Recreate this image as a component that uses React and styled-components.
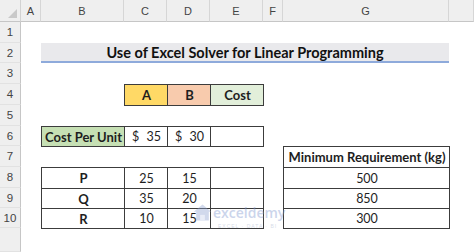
import React from "react";
import styled, { createGlobalStyle } from "styled-components";

const GlobalStyle = createGlobalStyle`
  html, body {
    margin: 0;
    padding: 0;
    background: #ffffff;
  }
  body {
    font-family: Lato, "Open Sans", "Liberation Sans", sans-serif;
    color: #1e1e1e;
  }
`;

//sheet layout
const Sheet = styled.div`
  position: relative;
  width: 474px;
  height: 252px;
  overflow: hidden;
  display: grid;
  grid-template-columns: 21px 20px 83px 43px 43px 53px 20px 166px 1fr;
  grid-template-rows: 22px 21px 20px 21px 21px 21px 20px 21px 21px 20px 20px 1fr;
  background: #ffffff;
`;

const Corner = styled.div`
  grid-column: 1;
  grid-row: 1;
  background: #efefef;
  border-right: 1px solid #d2d2d2;
  border-bottom: 1px solid #c6c6c6;
  position: relative;
  &::after {
    content: "";
    position: absolute;
    right: 3px;
    bottom: 3px;
    border-style: solid;
    border-width: 0 0 9px 9px;
    border-color: transparent transparent #c9c9c9 transparent;
  }
`;

const ColHead = styled.div`
  grid-column: ${(p) => p.$col};
  grid-row: 1;
  background: #efefef;
  border-right: 1px solid #d6d6d6;
  border-bottom: 1px solid #c6c6c6;
  display: flex;
  align-items: center;
  justify-content: center;
  font-family: "Liberation Sans", Arial, sans-serif;
  font-size: 11px;
  color: #444;
  padding-top: 1px;
`;

const RowHead = styled.div`
  grid-column: 1;
  grid-row: ${(p) => p.$row};
  background: #efefef;
  border-right: 1px solid #c6c6c6;
  border-bottom: 1px solid #e2e2e2;
  display: flex;
  align-items: center;
  justify-content: center;
  font-family: "Liberation Sans", Arial, sans-serif;
  font-size: 11.5px;
  color: #444;
`;

const Title = styled.div`
  grid-column: 3 / 9;
  grid-row: 3;
  background: #e9e9ec;
  border-bottom: 2px solid #8eaadb;
  display: flex;
  align-items: center;
  justify-content: center;
  font-weight: 700;
  font-size: 14.5px;
  color: #111;
`;

const Cell = styled.div`
  grid-column: ${(p) => p.$col};
  grid-row: ${(p) => p.$row};
  margin: 0 -1px -1px 0;
  border: 1px solid #3c3c3c;
  background: ${(p) => p.$bg || "#ffffff"};
  display: flex;
  align-items: center;
  justify-content: ${(p) => p.$align || "center"};
  font-weight: ${(p) => (p.$bold ? 700 : 400)};
  font-size: ${(p) => (p.$bold ? "13px" : "12.5px")};
  color: #1e1e1e;
  padding: 0 6px 0 7px;
  white-space: nowrap;
`;

const Dollar = styled.span`
  flex: 1;
`;

//watermark
const Mark = styled.div`
  position: absolute;
  left: 193px;
  top: 203px;
  display: flex;
  flex-direction: column;
  align-items: flex-start;
  opacity: 0.4;
  pointer-events: none;
`;

const MarkTop = styled.div`
  display: flex;
  align-items: center;
  gap: 1px;
`;

const MarkName = styled.span`
  font-family: "Open Sans", Lato, sans-serif;
  font-size: 14px;
  font-weight: 600;
  color: #7f97cf;
  line-height: 16px;
`;

const MarkSub = styled.span`
  margin: 1px 0 0 25px;
  font-family: "Liberation Sans", Arial, sans-serif;
  font-size: 5px;
  letter-spacing: 1px;
  color: #9aa9c8;
`;

const House = () => (
  <svg width="19" height="19" viewBox="0 0 24 24">
    <path d="M12 2 L23 11 L20 11 L20 22 L4 22 L4 11 L1 11 Z" fill="#8ea2d2" />
    <path d="M9 22 L9 15 L15 15 L15 22 Z" fill="#c9d3ec" />
  </svg>
);

const cols = ["A", "B", "C", "D", "E", "F", "G", ""];
const rows = [1, 2, 3, 4, 5, 6, 7, 8, 9, 10, ""];

const items = [
  { name: "P", a: 25, b: 15 },
  { name: "Q", a: 35, b: 20 },
  { name: "R", a: 10, b: 15 }
];
const needs = [500, 850, 300];

export default function App() {
  return (
    <>
      <GlobalStyle />
      <Sheet>
        <Corner />
        {cols.map((c, i) => (
          <ColHead key={i} $col={i + 2}>
            {c}
          </ColHead>
        ))}
        {rows.map((r, i) => (
          <RowHead key={i} $row={i + 2}>
            {r}
          </RowHead>
        ))}

        <Title>Use of Excel Solver for Linear Programming</Title>

        <Cell $col={4} $row={5} $bg="#ffd966" $bold>
          A
        </Cell>
        <Cell $col={5} $row={5} $bg="#f8cbad" $bold>
          B
        </Cell>
        <Cell $col={6} $row={5} $bg="#e2efda" $bold>
          Cost
        </Cell>

        <Cell $col={3} $row={7} $bg="#c6e0b4" $bold>
          Cost Per Unit
        </Cell>
        <Cell $col={4} $row={7} $align="space-between">
          <Dollar>$</Dollar>35
        </Cell>
        <Cell $col={5} $row={7} $align="space-between">
          <Dollar>$</Dollar>30
        </Cell>
        <Cell $col={6} $row={7} />

        {items.map((it, i) => (
          <React.Fragment key={it.name}>
            <Cell $col={3} $row={i + 9} $bold>
              {it.name}
            </Cell>
            <Cell $col={4} $row={i + 9}>
              {it.a}
            </Cell>
            <Cell $col={5} $row={i + 9}>
              {it.b}
            </Cell>
            <Cell $col={6} $row={i + 9} />
          </React.Fragment>
        ))}

        <Cell $col={8} $row={8} $bold>
          Minimum Requirement (kg)
        </Cell>
        {needs.map((n, i) => (
          <Cell key={n} $col={8} $row={i + 9}>
            {n}
          </Cell>
        ))}

        <Mark>
          <MarkTop>
            <House />
            <MarkName>exceldemy</MarkName>
          </MarkTop>
          <MarkSub>EXCEL · DATA · BI</MarkSub>
        </Mark>
      </Sheet>
    </>
  );
}
